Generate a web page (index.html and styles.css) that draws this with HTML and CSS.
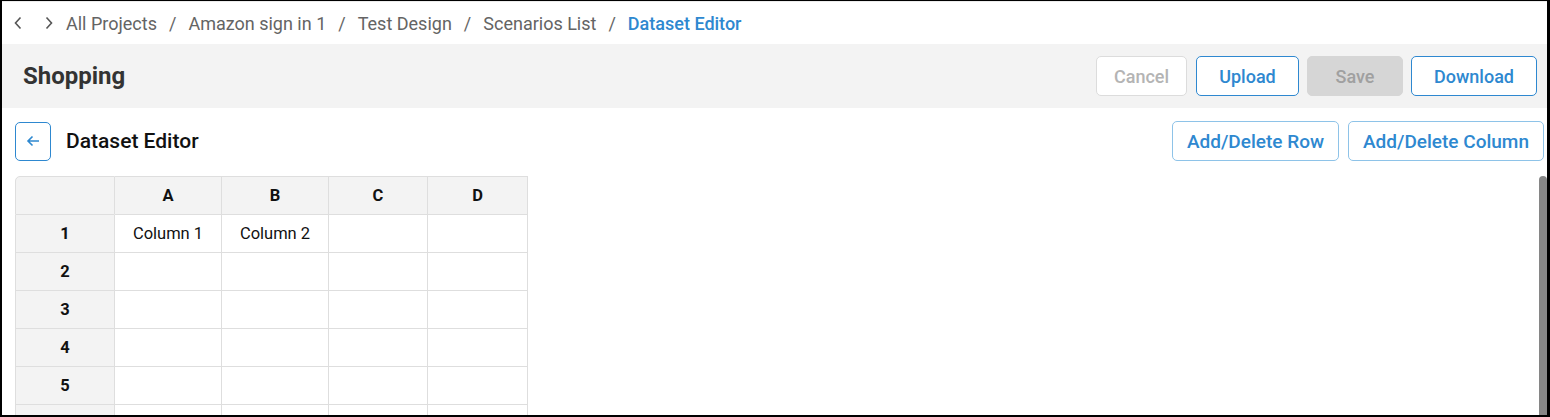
FILE: index.html
```html
<!DOCTYPE html>
<html>
<head>
<meta charset="utf-8">
<link rel="stylesheet" href="styles.css">
</head>
<body>
<div class="frame">
  <nav class="crumbs">
    <span class="nav-arrows">
      <svg width="10" height="14" viewBox="0 0 10 14"><path d="M7.5 1.5 L2.5 7 L7.5 12.5" fill="none" stroke="#555" stroke-width="1.6"/></svg>
      <svg width="10" height="14" viewBox="0 0 10 14"><path d="M2.5 1.5 L7.5 7 L2.5 12.5" fill="none" stroke="#555" stroke-width="1.6"/></svg>
    </span>
    <span class="crumb">All Projects</span><span class="sep">/</span>
    <span class="crumb">Amazon sign in 1</span><span class="sep">/</span>
    <span class="crumb">Test Design</span><span class="sep">/</span>
    <span class="crumb">Scenarios List</span><span class="sep">/</span>
    <span class="crumb current">Dataset Editor</span>
  </nav>
  <header class="topbar">
    <h1 class="title">Shopping</h1>
    <div class="actions">
      <button class="btn btn-cancel">Cancel</button>
      <button class="btn btn-outline btn-upload">Upload</button>
      <button class="btn btn-disabled">Save</button>
      <button class="btn btn-outline btn-download">Download</button>
    </div>
  </header>
  <section class="editor">
    <div class="editor-head">
      <div class="editor-title">
        <button class="back">
          <svg width="14" height="12" viewBox="0 0 14 12"><path d="M13 6 H2 M6.5 1.5 L2 6 L6.5 10.5" fill="none" stroke="#2e88d0" stroke-width="1.6"/></svg>
        </button>
        <h2>Dataset Editor</h2>
      </div>
      <div class="editor-actions">
        <button class="btn btn-light">Add/Delete Row</button>
        <button class="btn btn-light">Add/Delete Column</button>
      </div>
    </div>
    <div class="grid-wrap">
      <table class="grid">
        <colgroup>
          <col class="c0"><col class="c1"><col class="c2"><col class="c3"><col class="c4">
        </colgroup>
        <thead>
          <tr><th class="corner"></th><th>A</th><th>B</th><th>C</th><th>D</th></tr>
        </thead>
        <tbody>
          <tr><th>1</th><td>Column 1</td><td>Column 2</td><td></td><td></td></tr>
          <tr><th>2</th><td></td><td></td><td></td><td></td></tr>
          <tr><th>3</th><td></td><td></td><td></td><td></td></tr>
          <tr><th>4</th><td></td><td></td><td></td><td></td></tr>
          <tr><th>5</th><td></td><td></td><td></td><td></td></tr>
          <tr><th>6</th><td></td><td></td><td></td><td></td></tr>
        </tbody>
      </table>
      <div class="scroll-thumb"></div>
    </div>
  </section>
</div>
</body>
</html>
```
FILE: styles.css
```css
* { box-sizing: border-box; }
html, body { margin: 0; padding: 0; }
body {
  font-family: Roboto, "Liberation Sans", sans-serif;
  background: #fff;
  overflow: hidden;
}
.frame {
  width: 1550px;
  height: 417px;
  border-style: solid;
  border-color: #000;
  border-width: 1px 3px 2px 2px;
  overflow: hidden;
  display: flex;
  flex-direction: column;
  background: #fff;
}
.crumbs {
  height: 43px;
  flex: none;
  display: flex;
  align-items: center;
  padding-left: 11px;
  font-size: 18px;
  color: #646464;
  border-top: 1px solid #ececec;
}
.nav-arrows {
  display: flex;
  gap: 21px;
  margin-right: 12px;
  align-items: center;
}
.nav-arrows svg { display: block; }
.sep { margin: 0 12px; color: #666; }
.crumb.current { color: #2e88d0; font-weight: 500; }
.topbar {
  height: 64px;
  flex: none;
  background: #f3f3f3;
  display: flex;
  align-items: center;
  justify-content: space-between;
  padding: 0 10px 0 21px;
}
.title {
  margin: 0;
  font-size: 24px;
  font-weight: 700;
  color: #333;
}
.actions { display: flex; gap: 8px; }
.btn {
  font-family: inherit;
  font-size: 18px;
  font-weight: 500;
  height: 40px;
  border-radius: 5px;
  background: #fff;
  padding: 0 14px;
  cursor: pointer;
}
.btn-cancel { border: 1px solid #dcdcdc; color: #b4b4b4; width: 91px; margin-right: 1px; }
.btn-outline { border: 1px solid #2e88d0; color: #2e88d0; }
.btn-upload { width: 103px; }
.btn-download { width: 126px; }
.btn-disabled { border: 1px solid #d6d6d6; background: #d6d6d6; color: #a0a0a0; width: 96px; }
.editor {
  flex: 1;
  display: flex;
  flex-direction: column;
  min-height: 0;
}
.editor-head {
  height: 68px;
  flex: none;
  display: flex;
  align-items: center;
  justify-content: space-between;
  padding: 0 3px 2px 13px;
}
.editor-title { display: flex; align-items: center; gap: 15px; }
.back {
  width: 36px;
  height: 39px;
  border: 1px solid #2e88d0;
  border-radius: 5px;
  background: #fff;
  display: flex;
  align-items: center;
  justify-content: center;
  padding: 0;
}
.editor-title h2 {
  margin: 0;
  font-size: 21px;
  font-weight: 500;
  color: #111;
}
.editor-actions { display: flex; gap: 9px; }
.btn-light {
  border: 1px solid #8ec3e8;
  color: #2e88d0;
  font-size: 19px;
  height: 40px;
  padding: 0 14px;
}
.grid-wrap {
  position: relative;
  flex: 1;
  padding-left: 13px;
}
.grid {
  border-collapse: separate;
  border-spacing: 0;
  table-layout: fixed;
  width: 513px;
  font-size: 16.5px;
  color: #111;
}
.c0 { width: 100px; }
.c1 { width: 107px; }
.c2 { width: 107px; }
.c3 { width: 99px; }
.c4 { width: 100px; }
.grid th, .grid td {
  height: 38px;
  text-align: center;
  border-right: 1px solid #dedede;
  border-bottom: 1px solid #dedede;
  padding: 0;
}
.grid thead th { height: 39px; border-top: 1px solid #dedede; }
.grid tr > :first-child { border-left: 1px solid #dedede; }
.grid th { background: #f3f3f3; font-weight: 700; color: #111; }
.grid td { background: #fff; }
.grid .corner { border-top-left-radius: 5px; }
.scroll-thumb {
  position: absolute;
  right: 0;
  top: 0;
  bottom: 0;
  width: 8px;
  background: #868686;
  border-radius: 4px 4px 0 0;
}
```
